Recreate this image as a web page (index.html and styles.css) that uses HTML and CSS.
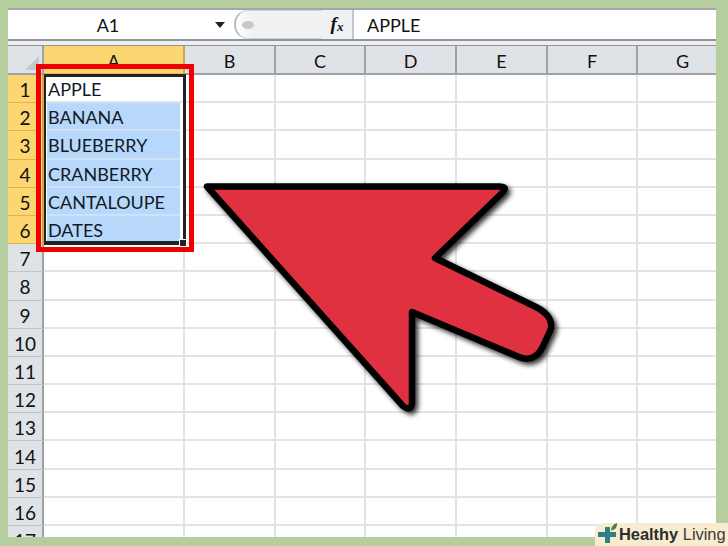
FILE: index.html
```html
<!DOCTYPE html>
<html lang="en">
<head>
  <meta charset="UTF-8" />
  <title>Selecting cells in a spreadsheet</title>
  <link rel="stylesheet" href="styles.css">
</head>
<body>
<div class="sheet">
  <div class="formula-bar">
    <div class="name-box">A1</div>
    <div class="name-arrow"></div>
    <div class="pill"><span class="pill-knob"></span></div>
    <div class="fx">f<sub>x</sub></div>
    <div class="formula-text">APPLE</div>
  </div>
  <div class="bar-gap"></div>
  <div class="row head-row">
    <div class="corner"><span class="corner-mark"></span></div>
    <div class="col-head active">A</div><div class="col-head">B</div><div class="col-head">C</div><div class="col-head">D</div><div class="col-head">E</div><div class="col-head">F</div><div class="col-head">G</div>
  </div>
  <div class="row"><div class="row-head active">1</div><div class="cell text">APPLE</div><div class="cell"></div><div class="cell"></div><div class="cell"></div><div class="cell"></div><div class="cell"></div><div class="cell last"></div></div>
  <div class="row"><div class="row-head active">2</div><div class="cell text picked">BANANA</div><div class="cell"></div><div class="cell"></div><div class="cell"></div><div class="cell"></div><div class="cell"></div><div class="cell last"></div></div>
  <div class="row"><div class="row-head active">3</div><div class="cell text picked">BLUEBERRY</div><div class="cell"></div><div class="cell"></div><div class="cell"></div><div class="cell"></div><div class="cell"></div><div class="cell last"></div></div>
  <div class="row"><div class="row-head active">4</div><div class="cell text picked">CRANBERRY</div><div class="cell"></div><div class="cell"></div><div class="cell"></div><div class="cell"></div><div class="cell"></div><div class="cell last"></div></div>
  <div class="row"><div class="row-head active">5</div><div class="cell text picked">CANTALOUPE</div><div class="cell"></div><div class="cell"></div><div class="cell"></div><div class="cell"></div><div class="cell"></div><div class="cell last"></div></div>
  <div class="row"><div class="row-head active">6</div><div class="cell text picked">DATES</div><div class="cell"></div><div class="cell"></div><div class="cell"></div><div class="cell"></div><div class="cell"></div><div class="cell last"></div></div>
  <div class="row"><div class="row-head">7</div><div class="cell"></div><div class="cell"></div><div class="cell"></div><div class="cell"></div><div class="cell"></div><div class="cell"></div><div class="cell last"></div></div>
  <div class="row"><div class="row-head">8</div><div class="cell"></div><div class="cell"></div><div class="cell"></div><div class="cell"></div><div class="cell"></div><div class="cell"></div><div class="cell last"></div></div>
  <div class="row"><div class="row-head">9</div><div class="cell"></div><div class="cell"></div><div class="cell"></div><div class="cell"></div><div class="cell"></div><div class="cell"></div><div class="cell last"></div></div>
  <div class="row"><div class="row-head">10</div><div class="cell"></div><div class="cell"></div><div class="cell"></div><div class="cell"></div><div class="cell"></div><div class="cell"></div><div class="cell last"></div></div>
  <div class="row"><div class="row-head">11</div><div class="cell"></div><div class="cell"></div><div class="cell"></div><div class="cell"></div><div class="cell"></div><div class="cell"></div><div class="cell last"></div></div>
  <div class="row"><div class="row-head">12</div><div class="cell"></div><div class="cell"></div><div class="cell"></div><div class="cell"></div><div class="cell"></div><div class="cell"></div><div class="cell last"></div></div>
  <div class="row"><div class="row-head">13</div><div class="cell"></div><div class="cell"></div><div class="cell"></div><div class="cell"></div><div class="cell"></div><div class="cell"></div><div class="cell last"></div></div>
  <div class="row"><div class="row-head">14</div><div class="cell"></div><div class="cell"></div><div class="cell"></div><div class="cell"></div><div class="cell"></div><div class="cell"></div><div class="cell last"></div></div>
  <div class="row"><div class="row-head">15</div><div class="cell"></div><div class="cell"></div><div class="cell"></div><div class="cell"></div><div class="cell"></div><div class="cell"></div><div class="cell last"></div></div>
  <div class="row"><div class="row-head">16</div><div class="cell"></div><div class="cell"></div><div class="cell"></div><div class="cell"></div><div class="cell"></div><div class="cell"></div><div class="cell last"></div></div>
  <div class="row"><div class="row-head">17</div><div class="cell"></div><div class="cell"></div><div class="cell"></div><div class="cell"></div><div class="cell"></div><div class="cell"></div><div class="cell last"></div></div>

  <div class="selection"><span class="handle"></span></div>
  <div class="red-box"></div>
</div>

<svg class="arrow" width="728" height="546" viewBox="0 0 728 546">
  <path d="M207 186.5 L499 186.5 Q508 186.5 503 192 L435 258 L536 307 C548 313 554 322 550 331 L543 346 C538 358 528 361 519 357 L412 312 L412 403 Q411 412 403 406 Z" fill="#e03141" stroke="#000" stroke-width="6.5" stroke-linejoin="round"/>
</svg>

<div class="watermark">
  <svg class="logo" width="22" height="23" viewBox="0 0 22 23">
    <path d="M10 8 V4 H15 V9 H21 V14 H15 V20 H10 V14 H3 V9 H10 Z" fill="#2f7f85"/>
    <path d="M16 7.5 Q16.5 1.5 22 0 Q22.5 6.5 16 7.5 Z" fill="#4f7f3a"/>
  </svg>
  <span class="brand"><b>Healthy</b> Living</span>
</div>
</body>
</html>
```

FILE: styles.css
```css
body {
  margin: 0;
  width: 728px;
  height: 546px;
  overflow: hidden;
  position: relative;
  background: #b6cd9d;
  font-family: 'Lato', sans-serif;
  color: #111;
}
.sheet {
  position: absolute;
  left: 8px;
  top: 8px;
  width: 708px;
  height: 529px;
  overflow: hidden;
  background: #fff;
}
.formula-bar {
  height: 29px;
  display: flex;
  align-items: center;
  border-top: 2px solid #a3a7ab;
  border-bottom: 2px solid #8f9499;
  font-size: 18px;
  background: #fff;
}
.name-box {
  width: 200px;
  text-align: center;
}
.name-arrow {
  width: 0;
  height: 0;
  margin-left: 7px;
  border-left: 5px solid transparent;
  border-right: 5px solid transparent;
  border-top: 6px solid #222;
}
.pill {
  margin-left: 9px;
  width: 88px;
  height: 29px;
  box-sizing: border-box;
  border-left: 2px solid #b9bcc0;
  border-top: 1px solid #d0d3d6;
  border-bottom: 1px solid #d0d3d6;
  border-radius: 14px 0 0 14px;
  background: linear-gradient(90deg, #fff 0, #f0f1f2 16px);
  display: flex;
  align-items: center;
  padding-left: 6px;
}
.pill-knob {
  width: 12px;
  height: 8px;
  border-radius: 50%;
  background: #c6cacd;
}
.fx {
  width: 32px;
  height: 29px;
  line-height: 27px;
  background: #f0f1f2;
  border-right: 2px solid #c3c6ca;
  box-sizing: border-box;
  font-family: 'Liberation Serif', serif;
  font-style: italic;
  font-weight: bold;
  font-size: 19px;
  text-align: center;
}
.fx sub {
  font-size: 13px;
  line-height: 0;
  vertical-align: -1px;
}
.formula-text {
  margin-left: 13px;
}
.bar-gap {
  height: 4px;
  background: #eceeef;
  border-bottom: 1px solid #8f9499;
}
.row {
  display: grid;
  grid-template-columns: 36px 141px 91px 90px 91px 91px 90px 91px;
  height: 28.2px;
  font-size: 18px;
}
.head-row {
  height: 29px;
}
.corner, .col-head, .row-head {
  background: #dfe3e8;
  box-sizing: border-box;
  display: flex;
  align-items: center;
  justify-content: center;
  padding-top: 2px;
  border-right: 2px solid #9ea2a7;
  border-bottom: 2px solid #9ea2a7;
}
.row-head {
  border-bottom: 1px solid #c2c6cb;
  font-size: 19px;
}
.corner {
  justify-content: flex-end;
  align-items: flex-end;
  padding: 0 3px 3px 0;
}
.corner-mark {
  width: 0;
  height: 0;
  border-left: 14px solid transparent;
  border-bottom: 14px solid #c4c8cc;
}
.col-head.active, .row-head.active {
  background: #fbd671;
  border-right-color: #c9a950;
  border-bottom-color: #e2b44c;
}
.cell {
  box-sizing: border-box;
  border-right: 2px solid #e3e3e3;
  border-bottom: 2px solid #e3e3e3;
}
.cell.last {
  border-right: none;
}
.cell.text {
  border-right: none;
  padding-left: 4px;
  padding-top: 2px;
  display: flex;
  align-items: center;
  color: #111a26;
  font-size: 18px;
}
.cell.picked {
  background: #b7d8fa;
  border-bottom-color: #cfe2f5;
  margin: 0 5px 0 3px;
  padding-left: 1px;
}
.selection {
  position: absolute;
  left: 36px;
  top: 66px;
  width: 142px;
  height: 171px;
  box-sizing: border-box;
  border: 3px solid #222;
  border-left-width: 2px;
  border-bottom-width: 4px;
}
.handle {
  position: absolute;
  right: -4px;
  bottom: -6px;
  width: 6px;
  height: 6px;
  background: #222;
  border: 1px solid #fff;
}
.red-box {
  position: absolute;
  left: 28px;
  top: 56px;
  width: 158px;
  height: 188px;
  box-sizing: border-box;
  border: 5px solid #f00000;
}
.arrow {
  position: absolute;
  left: 0;
  top: 0;
  filter: drop-shadow(3px 3px 2.5px rgba(0,0,0,0.8));
}
.watermark {
  position: absolute;
  left: 595px;
  top: 523px;
  width: 133px;
  height: 23px;
  background: #f7ebd0;
  border-radius: 9px 0 0 0;
  display: flex;
  align-items: center;
}
.logo {
  flex: none;
}
.brand {
  margin-left: 2px;
  font-family: 'Liberation Sans', sans-serif;
  font-size: 16.4px;
  color: #3a3a3a;
  white-space: nowrap;
}
.brand b {
  color: #2c2c2c;
}
```
